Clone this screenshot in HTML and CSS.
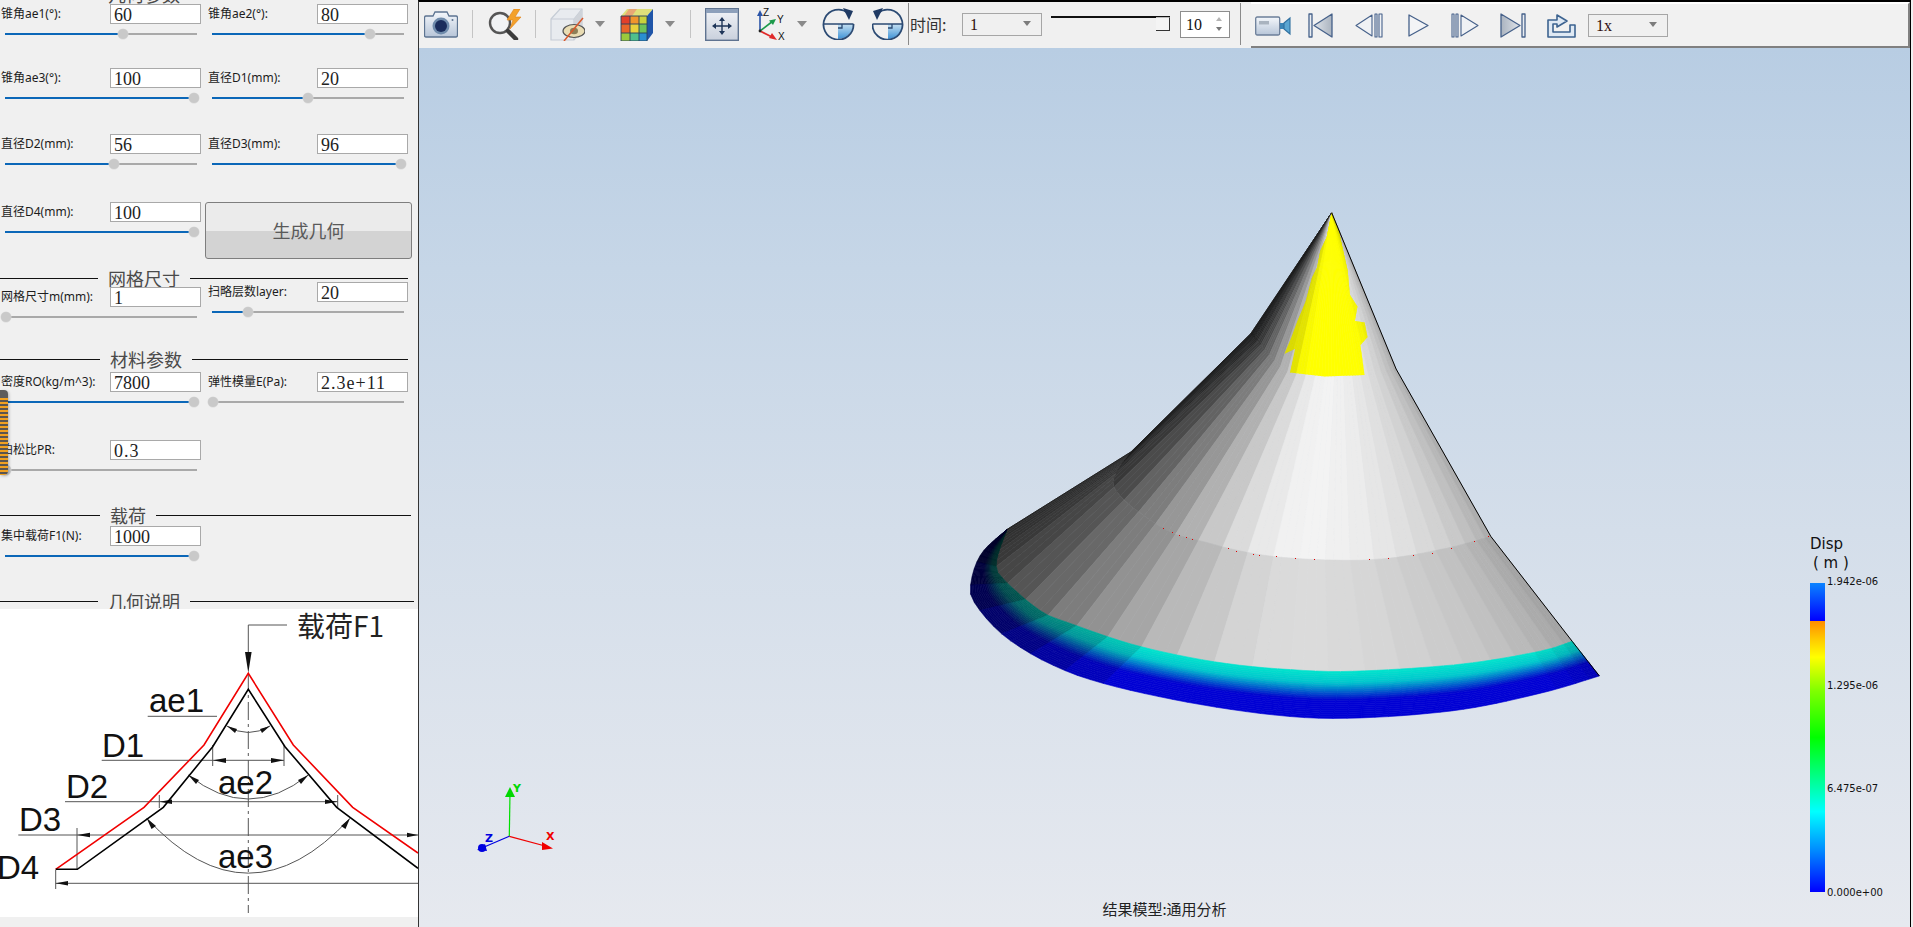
FILE: index.html
```html
<!DOCTYPE html>
<html lang="zh">
<head>
<meta charset="utf-8">
<title>结果模型</title>
<link rel="stylesheet" href="styles.css">
</head>
<body>
<svg class="defs" aria-hidden="true">
  <defs>
    <linearGradient id="steel" x1="0" y1="0" x2="0" y2="1"><stop offset="0" stop-color="#f4f7fb"/><stop offset="1" stop-color="#b7c5d8"/></linearGradient>
    <linearGradient id="pane" x1="0" y1="0" x2="0" y2="1"><stop offset="0" stop-color="#f2f4f8"/><stop offset="1" stop-color="#c9d0dc"/></linearGradient>
    <linearGradient id="navbtn" x1="0" y1="0" x2="1" y2="0"><stop offset="0" stop-color="#eef1f5"/><stop offset="1" stop-color="#aab3bf"/></linearGradient>
    <linearGradient id="navrev" x1="1" y1="0" x2="0" y2="0"><stop offset="0" stop-color="#eef1f5"/><stop offset="1" stop-color="#aab3bf"/></linearGradient>
    <linearGradient id="sky" x1="0" y1="0" x2="0" y2="1"><stop offset="0" stop-color="#c5e0f2"/><stop offset="1" stop-color="#3f93d6"/></linearGradient>
  </defs>
</svg>

<div class="app">
  <aside class="panel">
    <div class="section clip sec-a"><i class="line"></i><span class="title">几何参数</span><i class="line"></i></div>

    <div class="row r64">
      <div class="cell"><div class="field"><label>锥角ae1(°):</label><span class="box">60</span></div><div class="slider"><b class="fill" style="width:61.5%"></b><b class="thumb" style="left:61.5%"></b></div></div>
      <div class="cell"><div class="field"><label>锥角ae2(°):</label><span class="box">80</span></div><div class="slider"><b class="fill" style="width:82.5%"></b><b class="thumb" style="left:82.5%"></b></div></div>
    </div>
    <div class="row r66">
      <div class="cell"><div class="field"><label>锥角ae3(°):</label><span class="box">100</span></div><div class="slider"><b class="fill" style="width:98.5%"></b><b class="thumb" style="left:98.5%"></b></div></div>
      <div class="cell"><div class="field"><label>直径D1(mm):</label><span class="box">20</span></div><div class="slider"><b class="fill" style="width:50%"></b><b class="thumb" style="left:50%"></b></div></div>
    </div>
    <div class="row r68">
      <div class="cell"><div class="field"><label>直径D2(mm):</label><span class="box">56</span></div><div class="slider"><b class="fill" style="width:57%"></b><b class="thumb" style="left:57%"></b></div></div>
      <div class="cell"><div class="field"><label>直径D3(mm):</label><span class="box">96</span></div><div class="slider"><b class="fill" style="width:98.5%"></b><b class="thumb" style="left:98.5%"></b></div></div>
    </div>
    <div class="row r72">
      <div class="cell"><div class="field"><label>直径D4(mm):</label><span class="box">100</span></div><div class="slider"><b class="fill" style="width:98.5%"></b><b class="thumb" style="left:98.5%"></b></div></div>
      <div class="cell"><button class="build" type="button">生成几何</button></div>
    </div>

    <div class="section sec-a"><i class="line"></i><span class="title">网格尺寸</span><i class="line"></i></div>
    <div class="row r73">
      <div class="cell drop"><div class="field"><label>网格尺寸m(mm):</label><span class="box">1</span></div><div class="slider"><b class="fill" style="width:0"></b><b class="thumb" style="left:0.5%"></b></div></div>
      <div class="cell"><div class="field"><label>扫略层数layer:</label><span class="box">20</span></div><div class="slider"><b class="fill" style="width:19%"></b><b class="thumb" style="left:19%"></b></div></div>
    </div>

    <div class="section sec-b"><i class="line"></i><span class="title">材料参数</span><i class="line"></i></div>
    <div class="row r77">
      <div class="cell"><div class="field"><label>密度RO(kg/m^3):</label><span class="box">7800</span></div><div class="slider"><b class="fill" style="width:98.5%"></b><b class="thumb" style="left:98.5%"></b></div></div>
      <div class="cell"><div class="field"><label>弹性模量E(Pa):</label><span class="box wide">2.3e+11</span></div><div class="slider"><b class="fill" style="width:0"></b><b class="thumb" style="left:0.5%"></b></div></div>
    </div>
    <div class="row r71">
      <div class="cell"><div class="field"><label>泊松比PR:</label><span class="box wide">0.3</span></div><div class="slider"><b class="fill" style="width:0"></b><b class="thumb" style="left:0.5%"></b></div></div>
    </div>

    <div class="section sec-c"><i class="line"></i><span class="title">载荷</span><i class="line"></i></div>
    <div class="row r78 top7">
      <div class="cell"><div class="field"><label>集中载荷F1(N):</label><span class="box">1000</span></div><div class="slider"><b class="fill" style="width:98.5%"></b><b class="thumb" style="left:98.5%"></b></div></div>
    </div>

    <div class="section sec-d"><i class="line"></i><span class="title">几何说明</span><i class="line"></i></div>

    <svg class="sketch" viewBox="0 609 418 308" role="img">
      <g fill="none" stroke="#555" stroke-width="1">
        <path d="M248.3 673V913" stroke-dasharray="18 4 3 4"/>
        <path d="M287 625H248.3V655"/>
        <path d="M147.7 716.3H217"/>
        <path d="M226.7 726Q248.3 739 270 726"/>
        <path d="M101.7 760.3H284M212.7 745V766M284 745V766"/>
        <path d="M188.3 775Q248.3 823 308.3 775"/>
        <path d="M65 801.7H337.7M159.3 795V808M337.7 795V808"/>
        <path d="M18.3 835H418M77 828V870"/>
        <path d="M146.7 818.3Q248.3 928 350 818.3"/>
        <path d="M55.7 883.3H418M55.7 870V889"/>
      </g>
      <g fill="#111">
        <path d="M245 652H251.6L248.3 673Z"/>
        <path d="M227 726L237 729L235 733Z"/>
        <path d="M270 726L260 729L262 733Z"/>
        <path d="M213 760.3L226 758V763Z"/>
        <path d="M284 760.3L271 758V763Z"/>
        <path d="M188.3 775L199 780L196 784Z"/>
        <path d="M308.3 775L298 780L301 784Z"/>
        <path d="M159.5 801.7L172 799.5V804Z"/>
        <path d="M337.5 801.7L325 799.5V804Z"/>
        <path d="M77 835L90 832.8V837.2Z"/>
        <path d="M418 835L407 832.8V837.2Z"/>
        <path d="M146.7 818.3L156 826L151.5 829Z"/>
        <path d="M350 818.3L341 826L345.5 829Z"/>
        <path d="M55.7 883.3L68 881V885.6Z"/>
      </g>
      <path d="M55.7 869.3L144 807.3L204 745L248.3 673.3L293.3 745L352.7 807.3L418 853" fill="none" stroke="#f00000" stroke-width="1.6"/>
      <path d="M55.7 869.3H77.3L163.3 807.3L212.7 746.7L248.3 689.3L285 746.7L336.7 807.3L418 868.3" fill="none" stroke="#000" stroke-width="1.6"/>
      <g class="sketch-text">
        <text x="297" y="637" class="cjk">载荷F1</text>
        <text x="149" y="712">ae1</text>
        <text x="102" y="757">D1</text>
        <text x="218" y="794">ae2</text>
        <text x="66" y="798">D2</text>
        <text x="19" y="831">D3</text>
        <text x="218" y="868">ae3</text>
        <text x="-3" y="879">D4</text>
      </g>
    </svg>

    <div class="dock"></div>
  </aside>

  <main class="main">
    <header class="toolbar">
      <div class="tb-left">
        <svg class="ic m5" width="34" height="28" viewBox="0 0 34 28"><path d="M2 6H9L11 2H23L25 6H32Q33.5 6 33.5 8V25Q33.5 27 32 27H2Q.5 27 .5 25V8Q.5 6 2 6Z" fill="url(#steel)" stroke="#5d7491" stroke-width="1.3"/><circle cx="17" cy="16" r="8.5" fill="#6f8bab"/><circle cx="17" cy="16" r="6" fill="#1b2d5c"/><circle cx="28.5" cy="10" r="1" fill="#5d7491"/></svg>
        <i class="sep m14"></i>
        <svg class="ic m14" width="35" height="31" viewBox="0 0 35 31"><circle cx="13" cy="14" r="10" fill="#f1f3f5" stroke="#555" stroke-width="2.4"/><path d="M21 22L29 30" stroke="#3c3c3c" stroke-width="4.4" stroke-linecap="round"/><path d="M27 0L20 11H26L23 20L34 8H28L33 0Z" fill="#f3a12b" stroke="#e07f12" stroke-width=".6"/></svg>
        <i class="sep m13"></i>
        <svg class="ic m14" width="35" height="33" viewBox="0 0 35 33"><path d="M1 11L10 1H32V23L24 32H1Z" fill="#e8ebef" stroke="#c5ccd5" stroke-width="1.2"/><path d="M24 32V11H1M24 11L32 1" fill="none" stroke="#c5ccd5" stroke-width="1.2"/><path d="M24 11L32 1V23L24 32Z" fill="#cfd3d9"/><ellipse cx="24" cy="23" rx="11" ry="6.5" fill="#e9dcb3" stroke="#555" stroke-width="1.2"/><ellipse cx="24" cy="23" rx="4" ry="3.2" fill="#8d7f58"/><path d="M14 33L33 10" stroke="#d9582b" stroke-width="1.5"/></svg>
        <i class="drop-arrow m10"></i>
        <svg class="ic m15" width="33" height="33" viewBox="0 0 33 33"><path d="M1 8L7 1H33L27 8Z" fill="#dfe07a"/><path d="M9 1H17L12 8H4Z" fill="#e9a774"/><path d="M27 8L33 1V25L27 33Z" fill="#1f55a8"/><path d="M1 8H10V16H1Z" fill="#e23f2a"/><path d="M10 8H19V16H10Z" fill="#f0952c"/><path d="M19 8H27V16H19Z" fill="#c9d23c"/><path d="M1 16H10V25H1Z" fill="#e8652a"/><path d="M10 16H19V25H10Z" fill="#e8d23c"/><path d="M19 16H27V25H19Z" fill="#6cc25a"/><path d="M1 25H10V33H1Z" fill="#9bc93c"/><path d="M10 25H19V33H10Z" fill="#4fc08c"/><path d="M19 25H27V33H19Z" fill="#2a8fd0"/><path d="M10 8V33M19 8V33M1 16H27M1 25H27M1 8H27V33H1Z" fill="none" stroke="#26415f" stroke-width=".9"/></svg>
        <i class="drop-arrow m12"></i>
        <i class="sep m15"></i>
        <svg class="ic m14" width="34" height="33" viewBox="0 0 34 33"><rect x=".7" y=".7" width="32.6" height="31.6" fill="url(#pane)" stroke="#5f7390" stroke-width="1.4"/><rect x="1" y="1" width="32" height="4" fill="#8da0bb"/><path d="M17 9L14 13H20ZM17 27L14 23H20ZM7 18L11 15V21ZM27 18L23 15V21Z" fill="#1e3558"/><path d="M17 12V24M10 18H24" stroke="#1e3558" stroke-width="1.4"/></svg>
        <svg class="ic m18" width="30" height="34" viewBox="0 0 30 34"><path d="M3 24L3 7" stroke="#2a54a8" stroke-width="1.6"/><path d="M3 3L0 9H6Z" fill="#2a54a8"/><path d="M3 24L16 14" stroke="#1c9a4a" stroke-width="1.6"/><path d="M19 12L12 13.5L16 18Z" fill="#1c9a4a"/><path d="M3 24L17 31" stroke="#e02a2a" stroke-width="1.6"/><path d="M20 33L12 31L15 26Z" fill="#e02a2a"/><circle cx="3" cy="24" r="1.4" fill="#222"/><text class="axis-tx" x="6" y="9">Z</text><text class="axis-tx" x="20" y="16">Y</text><text class="axis-tx" x="21" y="33">X</text></svg>
        <i class="drop-arrow m10"></i>
        <svg class="ic m15" width="33" height="32" viewBox="0 0 33 32"><path d="M16 16V31A15 15 0 0 0 31 16Z" fill="url(#sky)"/><path d="M1.500 16H31.500M20 16V20H16" fill="none" stroke="#2b4a73" stroke-width="1.300"/><path d="M26 5A15 15 0 1 0 31.500 16" fill="none" stroke="#2b4a73" stroke-width="1.800"/><path d="M21 0L31 3L27 12Z" fill="#1f3a63"/></svg>
        <svg class="ic m17" width="32" height="32" viewBox="0 0 32 32"><path d="M16 16V31A15 15 0 0 0 30.500 16Z" fill="url(#sky)"/><path d="M.5 16H30.500M20 16V20H16" fill="none" stroke="#2b4a73" stroke-width="1.300"/><path d="M6 5A15 15 0 1 1 .5 16" fill="none" stroke="#2b4a73" stroke-width="1.800"/><path d="M11 0L1 3L5 12Z" fill="#1f3a63"/></svg>
        <i class="sep m4 tall"></i>
        <span class="time">时间:</span>
        <div class="combo m12"><span>1</span><i class="combo-arrow"></i></div>
        <div class="time-slider m9"><i class="time-grip"></i></div>
        <div class="spin"><span>10</span><i class="spin-btns"></i></div>
        <i class="sep m10 tall"></i>
      </div>
      <div class="tb-right">
        <svg class="ic m4" width="36" height="20" viewBox="0 0 36 20"><rect x=".7" y="1" width="24" height="18" rx="1.500" fill="url(#steel)" stroke="#6c7f99" stroke-width="1.300"/><rect x="4" y="5" width="10" height="3.500" fill="#a9b3bf"/><path d="M25 7H29V13H25Z" fill="#3b86b8"/><path d="M29 7L35 2V18L29 13Z" fill="#5aa6d2" stroke="#2f6f9f" stroke-width="1.100"/></svg>
        <svg class="ic m17" width="25" height="25" viewBox="0 0 25 25"><path d="M1 1H4V24H1ZM6 12.500L24 1V24Z" fill="url(#navbtn)" stroke="#46618a" stroke-width="1.300" stroke-linejoin="round"/></svg>
        <svg class="ic m22" width="28" height="25" viewBox="0 0 28 25"><path d="M20 1H22V24H20ZM24 1H27V24H24ZM1 12.500L17 2V23Z" fill="#f0f2f5" stroke="#46618a" stroke-width="1.100" stroke-linejoin="round"/></svg>
        <svg class="ic m25" width="21" height="25" viewBox="0 0 21 25"><path d="M1 2L20 12.500L1 23Z" fill="#f3f4f6" stroke="#46618a" stroke-width="1.300" stroke-linejoin="round"/></svg>
        <svg class="ic m22" width="28" height="25" viewBox="0 0 28 25"><path d="M1 1H3V24H1ZM5 1H7V24H5ZM10 2L27 12.500L10 23Z" fill="#f0f2f5" stroke="#46618a" stroke-width="1.100" stroke-linejoin="round"/></svg>
        <svg class="ic m21" width="26" height="25" viewBox="0 0 26 25"><path d="M25 1H22V24H25ZM20 12.500L1 1V24Z" fill="url(#navrev)" stroke="#46618a" stroke-width="1.300" stroke-linejoin="round"/></svg>
        <svg class="ic m21 lift" width="29" height="27" viewBox="0 0 29 27"><path d="M1 9H10V4L20 10L10 16V13H6V21H23V14H28V26H1Z" fill="#dfe9f4" stroke="#3d6390" stroke-width="1.600" stroke-linejoin="round"/></svg>
        <div class="combo m12"><span>1x</span><i class="combo-arrow"></i></div>
      </div>
    </header>

    <section class="viewer">
      <svg id="scene" class="scene" viewBox="419 48 1491 878">
        <defs><clipPath id="yellowClip"><polygon id="yellowPoly"/></clipPath></defs>
        <g id="cone"></g>
        <g class="triad">
          <path d="M509.300 836.300L510 793" stroke="#00e000" stroke-width="1.200" fill="none"/>
          <path d="M510 787L515 797H505Z" fill="#00d800"/>
          <path d="M509.300 836.300L547 846.500" stroke="#f00000" stroke-width="1.200" fill="none"/>
          <path d="M553 848.500L542 850V842Z" fill="#f00000"/>
          <path d="M509.300 836.300L483 847.500" stroke="#0000e0" stroke-width="1.200" fill="none"/>
          <path d="M477 850L485 844L487 851Z" fill="#0000e0"/>
          <circle cx="482" cy="848" r="4" fill="#0000e0"/>
          <text x="513" y="792" class="t-y">Y</text>
          <text x="546" y="840" class="t-x">X</text>
          <text x="485" y="842" class="t-z">Z</text>
        </g>
      </svg>
      <div class="legend">
        <div class="legend-title">Disp</div>
        <div class="legend-unit">( m )</div>
        <div class="legend-body">
          <div class="legend-bar"></div>
          <div class="legend-ticks"><span>1.942e-06</span><span>1.295e-06</span><span>6.475e-07</span><span>0.000e+00</span></div>
        </div>
      </div>
      <div class="caption">结果模型:通用分析</div>
    </section>
  </main>
</div>
<script src="cone.js"></script>
</body>
</html>
```

FILE: styles.css
```css
* { box-sizing: border-box; }
html, body { margin: 0; height: 100%; overflow: hidden; background: #f0f0f0; }
body { font-family: "Noto Sans", "Noto Sans CJK SC", sans-serif; }
.defs { position: absolute; width: 0; height: 0; }

.app { display: flex; height: 927px; }

/* left parameter panel */
.panel { position: relative; flex: 0 0 418px; height: 927px; overflow: hidden; background: #f0f0f0; padding-top: 4px; display: flex; flex-direction: column; }

.row { display: grid; grid-template-columns: 207px 211px; flex: none; }
.r64 { height: 64px; } .r66 { height: 66px; } .r68 { height: 68px; } .r72 { height: 72px; }
.r73 { height: 73px; }
.r77 { height: 77px; padding-top: 9px; }
.r71 { height: 71px; }
.r78 { height: 78px; }
.top7 { padding-top: 7px; }

.cell.drop { padding-top: 5px; }
.field { display: flex; align-items: center; height: 20px; padding-left: 1px; }
.field label { flex: 0 0 109px; font-size: 12px; line-height: 20px; color: #1c1c1c; white-space: nowrap; }
.box { flex: 0 0 91px; height: 20px; border: 1px solid #a9a9a9; background: #fff; padding: 1px 0 0 3px; font: 18px/18px "Liberation Serif", "Noto Sans CJK SC", serif; color: #222; }
.box.wide { letter-spacing: 1px; }

.slider { position: relative; width: 192px; height: 2px; margin: 9px 0 0 5px; background: #a9a9a9; }
.fill { position: absolute; left: 0; top: 0; height: 2px; background: #0b67b8; }
.thumb { position: absolute; top: -4px; width: 10px; height: 10px; margin-left: -5px; border-radius: 50%; background: #c9c9c9; box-shadow: 0 0 0 .5px #d8d8d8; }

.build { width: 207px; height: 57px; margin-left: -2px; padding: 0 0 2px; border: 1px solid #7e7e7e; border-radius: 3px; background: linear-gradient(#ebebeb 0, #ebebeb 50%, #d3d3d3 50%, #d3d3d3 100%); color: #5a5a5a; font: 18px "Noto Sans CJK SC", sans-serif; }

.section { --left: 98px; --pad: 10px; --right: 10px; flex: none; display: flex; align-items: center; height: 8px; padding-right: var(--right); }
.section .line { height: 1px; background: #111; }
.section .line:first-child { flex: 0 0 var(--left); }
.section .line:last-child { flex: 1; }
.section .title { flex: none; margin: 0 var(--pad); font: 18px/18px "Noto Sans CJK SC", sans-serif; color: #4a4a4a; }
.sec-a { --left: 98px; --right: 10px; }
.sec-b { --left: 100px; --right: 10px; }
.sec-c { --left: 100px; --right: 7px; }
.sec-d { --left: 98px; --right: 4px; margin-bottom: 4px; }
.clip { margin-top: -14px; margin-bottom: 6px; }
.clip .line { visibility: hidden; }

.sketch { display: block; flex: none; width: 418px; height: 308px; background: #fff; }
.sketch-text text { font: 33px "Liberation Sans", sans-serif; fill: #111; }
.sketch-text .cjk { font: 28px "Noto Sans CJK SC", "Liberation Sans", sans-serif; fill: #222; }

.dock { position: absolute; left: 0; top: 390px; width: 8px; height: 85px; border-radius: 0 4px 4px 0; background: linear-gradient(#5c5c5c 0, #5c5c5c 8px, transparent 8px), repeating-linear-gradient(#f0a020 0, #f0a020 2px, #5a5550 2px, #5a5550 4px); box-shadow: 1px 1px 3px rgba(0,0,0,.25); }

/* right side */
.main { flex: none; width: 1493px; height: 927px; border-top: 2px solid #000; border-left: 1px solid #333; border-right: 1px solid #000; margin-right: 2px; display: flex; flex-direction: column; }

.toolbar { flex: none; height: 46px; display: flex; }
.tb-left { display: flex; align-items: center; flex: 0 0 832px; height: 44px; background: #f0f0f0; }
.tb-right { display: flex; align-items: center; flex: 1; border-top: 2px solid #fff; border-bottom: 2px solid #808080; border-right: 2px solid #808080; background: #f1f1f1; height: 46px; padding-top: 1px; }

.ic { flex: none; display: block; }
.lift { margin-top: -3px; }
.sep { flex: none; width: 1px; height: 28px; background: #c4c4c4; }
.sep.tall { height: 42px; background: #8a8a8a; }
.drop-arrow { flex: none; width: 0; height: 0; border: 5px solid transparent; border-top: 6px solid #8a8a8a; border-bottom: 0; }

.m4 { margin-left: 4px; } .m5 { margin-left: 5px; } .m9 { margin-left: 9px; } .m10 { margin-left: 10px; }
.m12 { margin-left: 12px; } .m13 { margin-left: 13px; } .m14 { margin-left: 14px; } .m15 { margin-left: 15px; }
.m17 { margin-left: 17px; } .m18 { margin-left: 18px; } .m21 { margin-left: 21px; } .m22 { margin-left: 22px; } .m25 { margin-left: 25px; }

.axis-tx { font: 10px "Liberation Sans", sans-serif; fill: #111; }

.time { flex: none; margin-left: 1px; width: 40px; font: 16px/20px "Noto Sans CJK SC", sans-serif; color: #333; white-space: nowrap; }
.combo { position: relative; flex: none; width: 80px; height: 23px; border: 1px solid #a6a6a6; padding-left: 7px; font: 16px/22px "Liberation Serif", serif; color: #2e0d0d; background: #f0f0f0; }
.combo-arrow { position: absolute; right: 10px; top: 7px; width: 0; height: 0; border: 4px solid transparent; border-top: 5px solid #7c7c7c; border-bottom: 0; }

.time-slider { position: relative; flex: none; width: 119px; height: 14px; margin-top: -3px; border-top: 2px solid #111; }
.time-grip { position: absolute; right: 0; top: -1px; width: 14px; height: 14px; border-right: 1px solid #333; border-bottom: 1px solid #333; border-top: 1px solid #bbb; background: #f4f4f4; }
.spin { position: relative; flex: none; width: 50px; height: 27px; margin-left: 10px; border: 1px solid #8d8d8d; background: #fff; padding-left: 5px; font: 16px/25px "Liberation Serif", serif; color: #111; }
.spin-btns { position: absolute; right: 7px; top: 6px; width: 6px; height: 13px; }
.spin-btns::before, .spin-btns::after { content: ""; position: absolute; left: 0; width: 0; height: 0; border: 3px solid transparent; }
.spin-btns::before { top: -1px; border-top: 0; border-bottom: 4px solid #b4b4b4; }
.spin-btns::after { bottom: 0; border-bottom: 0; border-top: 4px solid #777; }

.viewer { position: relative; flex: 1; overflow: hidden; background: linear-gradient(#b8cde3 0, #c6d6e7 25%, #d4deea 55%, #e6e9ef 100%); }
.scene { position: absolute; left: 0; top: 0; width: 1491px; height: 878px; display: block; }
.triad text { font: bold 11px "DejaVu Sans", sans-serif; }
.t-x { fill: #f00000; } .t-y { fill: #00d800; } .t-z { fill: #0000e0; }

.legend { position: absolute; left: 1391px; top: 485px; width: 100px; color: #111; }
.legend-title { height: 22px; font: 15px/22px "DejaVu Sans", sans-serif; }
.legend-unit { height: 16px; padding-left: 3px; font: 15px/16px "DejaVu Sans", sans-serif; }
.legend-body { display: flex; height: 309px; margin-top: 12px; }
.legend-bar { flex: 0 0 15px; background: linear-gradient(#0a84ff 0, #0000ff 12.2%, #ff8c00 12.3%, #ffc800 18%, #ffff00 24%, #7fff00 35%, #00ff00 50%, #00ff80 62%, #00ffff 74%, #0090ff 86%, #0000ff 100%); }
.legend-ticks { display: flex; flex-direction: column; justify-content: space-between; height: 323px; margin: -7px 0 0 2px; font: 10px/12px "DejaVu Sans", sans-serif; white-space: nowrap; }

.caption { position: absolute; left: 0; right: 0; bottom: 8px; text-align: center; font: 15px/20px "Noto Sans CJK SC", sans-serif; color: #222; }
```

FILE: cone.js
```js
// Draws the faceted FEA result cone into the viewer's SVG.
(function () {
  var NS = 'http://www.w3.org/2000/svg';
  var cone = document.getElementById('cone');
  var Z = function (x, y) { return [950 + x / 2.376, 200 + y / 2.958]; };
  var zz = function (list) { return list.map(function (p) { return Z(p[0], p[1]); }); };

  var apex = Z(907, 38);
  var R1 = zz([[715, 395], [805, 510], [890, 522], [985, 518], [1060, 500]]);
  var R2 = zz([[430, 745], [390, 850], [505, 970], [600, 1010], [740, 1050], [900, 1065], [1040, 1060], [1180, 1030], [1285, 995]]);
  var R3 = zz([[135, 975], [110, 1075], [130, 1125], [215, 1215], [285, 1252], [450, 1320], [650, 1370], [850, 1392], [1000, 1392], [1220, 1372], [1400, 1335], [1478, 1305]]);
  var R4 = zz([[135, 975], [75, 1045], [50, 1130], [60, 1195], [145, 1305], [300, 1405], [520, 1475], [760, 1522], [950, 1533], [1200, 1510], [1400, 1460], [1543, 1408]]);

  var FACETS = 24, SUB = 3, N = FACETS * SUB;

  // Catmull-Rom smoothing so that the rings read as curves rather than chords
  function smooth(p) {
    var out = [], i, k;
    for (i = 0; i < p.length - 1; i++) {
      var a = p[Math.max(i - 1, 0)], b = p[i], c = p[i + 1], d = p[Math.min(i + 2, p.length - 1)];
      for (k = 0; k < 8; k++) {
        var t = k / 8, t2 = t * t, t3 = t2 * t;
        out.push([0, 1].map(function (n) {
          return 0.5 * (2 * b[n] + (c[n] - a[n]) * t + (2 * a[n] - 5 * b[n] + 4 * c[n] - d[n]) * t2 + (3 * b[n] - a[n] - 3 * c[n] + d[n]) * t3);
        }));
      }
    }
    out.push(p[p.length - 1]);
    return out;
  }

  // facets are equal in angle, so they crowd together towards the silhouettes
  function warp(u) { return 0.75 * (1 - Math.cos(Math.PI * u)) / 2 + 0.25 * u; }

  function resample(ctrl, n) {
    var pts = smooth(ctrl), d = [0], i;
    for (i = 1; i < pts.length; i++) {
      d[i] = d[i - 1] + Math.hypot(pts[i][0] - pts[i - 1][0], pts[i][1] - pts[i - 1][1]);
    }
    var out = [], seg = 1;
    for (i = 0; i <= n; i++) {
      var s = d[d.length - 1] * warp(i / n);
      while (seg < d.length - 1 && d[seg] < s) seg++;
      var f = (s - d[seg - 1]) / (d[seg] - d[seg - 1]);
      out.push([pts[seg - 1][0] + (pts[seg][0] - pts[seg - 1][0]) * f, pts[seg - 1][1] + (pts[seg][1] - pts[seg - 1][1]) * f]);
    }
    return out;
  }

  var r1 = resample(R1, N), r2 = resample(R2, N), r3 = resample(R3, N), r4 = resample(R4, N);
  var r0 = r1.map(function () { return apex; });

  function shade(u) {
    if (u < 0.55) {
      return 26 + 217 * Math.pow(Math.sin(u / 0.55 * Math.PI / 2), 2.2);
    }
    return 243 - 75 * Math.pow((u - 0.55) / 0.45, 1.5);
  }

  function quad(parent, a, b, c, d, color) {
    var p = document.createElementNS(NS, 'polygon');
    var s = [a, b, c, d].map(function (q) { return q[0].toFixed(1) + ',' + q[1].toFixed(1); }).join(' ');
    p.setAttribute('points', s);
    p.setAttribute('fill', color);
    p.setAttribute('stroke', color);
    p.setAttribute('stroke-width', '0.6');
    parent.appendChild(p);
  }
  function gray(v) { v = Math.round(Math.min(255, v)); return 'rgb(' + v + ',' + v + ',' + v + ')'; }
  function facetShade(i) { return shade((Math.floor(i / SUB) + 0.5) / FACETS); }

  var i, j;
  var M = 24;
  function lerp(a, b, k) { return [a[0] + (b[0] - a[0]) * k, a[1] + (b[1] - a[1]) * k]; }

  for (i = 0; i < N; i++) {
    var s = facetShade(i);
    quad(cone, r0[i], r0[i + 1], r1[i + 1], r1[i], gray(s));
    quad(cone, r1[i], r1[i + 1], r2[i + 1], r2[i], gray(s));
    quad(cone, r2[i], r2[i + 1], r3[i + 1], r3[i], gray(25 + s * 0.8));

    var f = Math.max(0.2, Math.min(1, s / 200));
    for (j = 0; j < M; j++) {
      var v = (j + 0.5) / M, g, b;
      if (v < 0.25) { g = 228 - 120 * v; b = 205; }
      else if (v < 0.62) { g = 198 * (0.62 - v) / 0.37; b = 205; }
      else { g = 0; b = 212; }
      quad(cone,
        lerp(r3[i], r4[i], j / M), lerp(r3[i + 1], r4[i + 1], j / M),
        lerp(r3[i + 1], r4[i + 1], (j + 1) / M), lerp(r3[i], r4[i], (j + 1) / M),
        'rgb(0,' + Math.round(g * f) + ',' + Math.round(b * f) + ')');
    }
  }

  // yellow cap: same facets, clipped to the jagged contour boundary
  var jag = zz([[907, 38], [895, 110], [880, 150], [872, 200], [860, 230], [845, 300], [825, 360], [810, 410], [795, 455], [820, 440], [808, 510], [890, 522], [985, 518], [975, 430], [992, 405], [985, 362], [962, 358], [968, 315], [950, 280], [945, 210], [925, 100]]);
  document.getElementById('yellowPoly').setAttribute('points', jag.map(function (q) { return q.join(','); }).join(' '));
  var capG = document.createElementNS(NS, 'g');
  capG.setAttribute('clip-path', 'url(#yellowClip)');
  for (i = 0; i < N; i++) {
    var y = Math.max(0.86, Math.min(1, facetShade(i) / 225));
    quad(capG, r0[i], r0[i + 1], r1[i + 1], r1[i], 'rgb(' + Math.round(255 * y) + ',' + Math.round(255 * y) + ',0)');
  }
  cone.appendChild(capG);

  function polyline(pts, color, width) {
    var p = document.createElementNS(NS, 'polyline');
    p.setAttribute('points', pts.map(function (q) { return q[0].toFixed(1) + ',' + q[1].toFixed(1); }).join(' '));
    p.setAttribute('fill', 'none');
    p.setAttribute('stroke', color);
    p.setAttribute('stroke-width', width);
    cone.appendChild(p);
  }
  polyline([apex, r1[N], r2[N], r3[N], r4[N]], '#000', 1);
  polyline([apex, r1[0], r2[0], r4[0]], '#222', 1);

  // stray red contour pixels along the middle ring
  [[505, 970], [528, 983], [545, 990], [560, 996], [575, 1003], [660, 1030], [680, 1037], [720, 1046], [735, 1049], [775, 1054], [820, 1060], [865, 1063], [995, 1063], [1040, 1060], [1100, 1051], [1145, 1043], [1190, 1030], [1245, 1010], [1278, 995]].forEach(function (q) {
    var p = Z(q[0], q[1]);
    var r = document.createElementNS(NS, 'rect');
    r.setAttribute('x', Math.round(p[0]));
    r.setAttribute('y', Math.round(p[1]));
    r.setAttribute('width', 1);
    r.setAttribute('height', 1);
    r.setAttribute('fill', '#e00000');
    cone.appendChild(r);
  });
})();
```
